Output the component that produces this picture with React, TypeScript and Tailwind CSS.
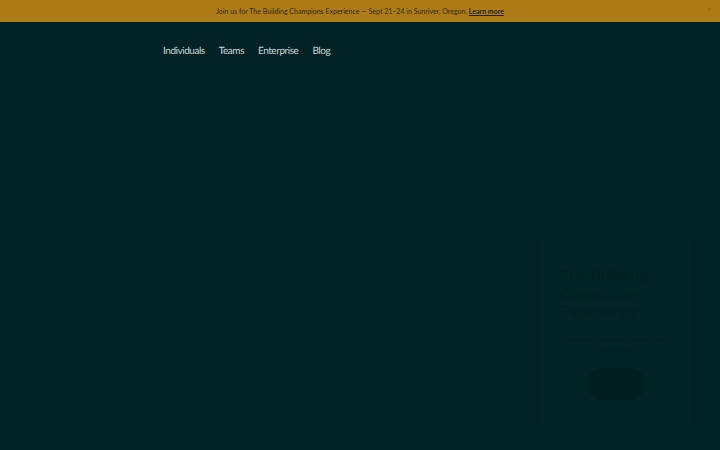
import React from "react";
import { X } from "lucide-react";

const font = "font-['Lato','Liberation_Sans',sans-serif]";

export default function App() {
  return (
    <div className={`relative h-[450px] w-[720px] overflow-hidden bg-[#002225] ${font}`}>
      {/* Announcement banner */}
      <div className="relative flex h-[22px] items-center justify-center bg-[#ae7c17] pt-[1px] text-[7px] text-[#2e2a12]">
        <p>
          Join us for The Building Champions Experience — Sept 21–24 in Sunriver, Oregon.{" "}
          <a className="font-bold text-[#1c2413] underline">Learn more</a>
        </p>
        <X size={5} strokeWidth={3} className="absolute right-[8px] top-[7px] text-[#7a5c14]" />
      </div>

      {/* Nav */}
      <nav className="flex h-[56px] items-center gap-[14px] pl-[163px] pt-[2px] text-[10px] tracking-[-0.45px] text-[#ccd6d6] [text-rendering:geometricPrecision]">
        <a>Individuals</a>
        <a>Teams</a>
        <a>Enterprise</a>
        <a>Blog</a>
      </nav>

      {/* Popup, almost faded out */}
      <div className="absolute left-[540px] top-[240px] flex h-[190px] w-[152px] flex-col bg-[#002326] px-[20px] pt-[26px]">
        <h2 className="text-[16px] leading-[18px] font-medium text-[#001f21]">
          The Building
          <br />
          Champions
          <br />
          Experience
        </h2>
        <p className="mt-[14px] text-center text-[7px] leading-[10px] text-[#012023]">
          Join us in Sunriver, Oregon this September
        </p>
        <button className="mx-auto mt-[14px] h-[32px] w-[58px] rounded-full bg-[#001e20] text-[8px] text-[#012427]">
          Join
        </button>
      </div>
    </div>
  );
}
